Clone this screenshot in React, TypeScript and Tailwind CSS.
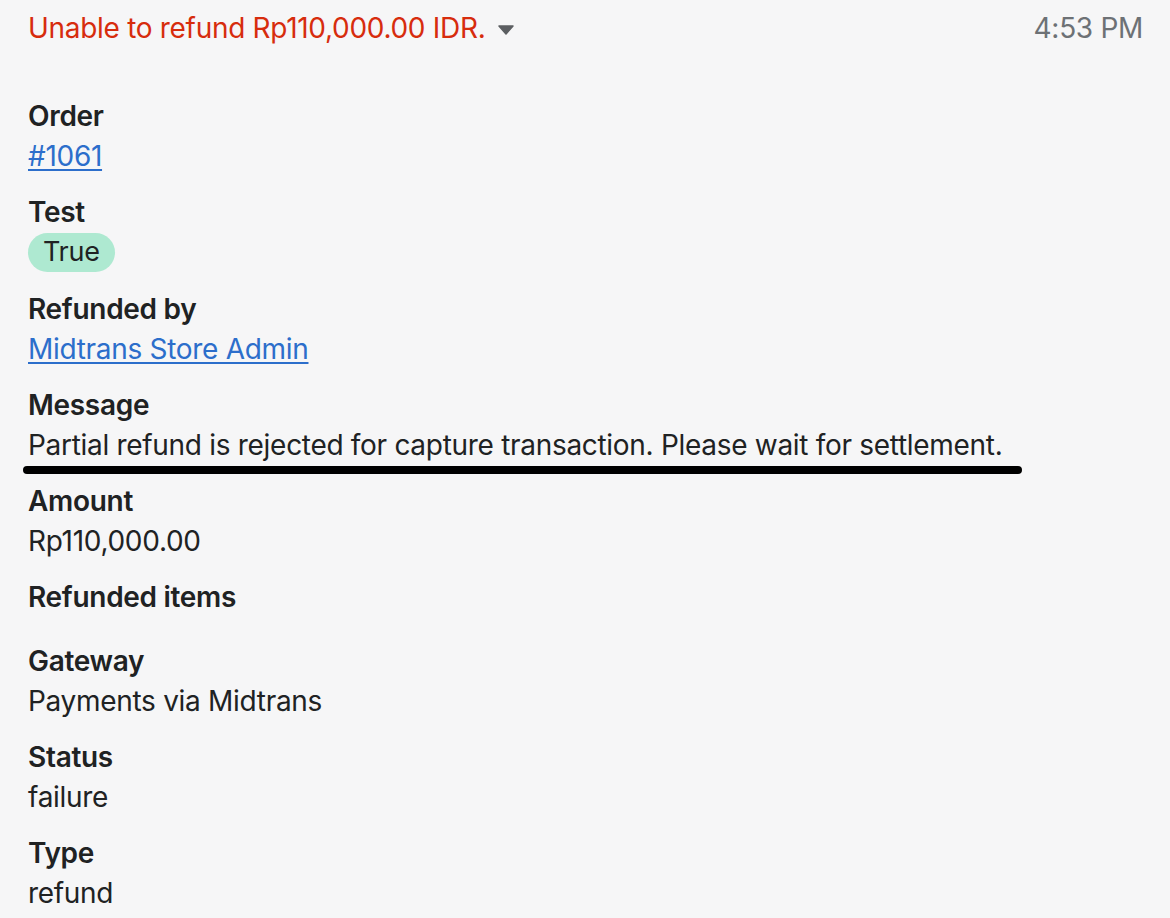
import React from "react";

const font = { fontFamily: "Inter, 'Noto Sans', sans-serif" };

function Field({ label, children }: { label: string; children?: React.ReactNode }) {
  return (
    <div className="flex flex-col">
      <div className="text-[28px] leading-[40px] font-semibold text-[#202223] tracking-[-0.3px]">{label}</div>
      {children}
    </div>
  );
}

function Value({ children }: { children: React.ReactNode }) {
  return <div className="text-[28px] leading-[40px] text-[#202223] tracking-[-0.3px]">{children}</div>;
}

function Link({ children }: { children: React.ReactNode }) {
  return (
    <a
      href="#"
      className="text-[28px] leading-[40px] text-[#2c6ecb] tracking-[-0.3px] underline underline-offset-[3px] decoration-[2px] self-start"
    >
      {children}
    </a>
  );
}

export default function App() {
  return (
    <div className="w-[1170px] h-[918px] bg-[#f6f6f7] overflow-hidden" style={font}>
      <div className="flex items-center justify-between pl-[28px] pr-[27px] pt-[8px]">
        <div className="flex items-center gap-[13px]">
          <span className="text-[28px] leading-[40px] text-[#d72c0d] tracking-[-0.3px]">
            Unable to refund Rp110,000.00 IDR.
          </span>
          <svg width="16" height="10" viewBox="0 0 16 10" className="mt-[3px]">
            <path d="M1 1h14L8 9z" fill="#5c5f62" stroke="#5c5f62" strokeWidth="1.5" strokeLinejoin="round" />
          </svg>
        </div>
        <span className="text-[28px] leading-[40px] text-[#6d7175] tracking-[-0.3px]">4:53 PM</span>
      </div>

      <div className="flex flex-col gap-[16px] pl-[28px] pt-[48px]">
        <Field label="Order">
          <Link>#1061</Link>
        </Field>
        <Field label="Test">
          <div className="py-[1px]">
            <span className="inline-flex items-center h-[39px] px-[15px] rounded-full bg-[#aee9d1] text-[27px] text-[#202223] tracking-[-0.3px]">
              True
            </span>
          </div>
        </Field>
        <Field label="Refunded by">
          <Link>Midtrans Store Admin</Link>
        </Field>
        <Field label="Message">
          <div className="relative">
            <Value>Partial refund is rejected for capture transaction. Please wait for settlement.</Value>
            {/* hand-drawn annotation under the message */}
            <div className="absolute left-[-5px] top-[41px] w-[999px] h-[8px] rounded-full bg-black" />
          </div>
        </Field>
        <Field label="Amount">
          <Value>Rp110,000.00</Value>
        </Field>
        <Field label="Refunded items">
          <div className="h-[8px]" />
        </Field>
        <Field label="Gateway">
          <Value>Payments via Midtrans</Value>
        </Field>
        <Field label="Status">
          <Value>failure</Value>
        </Field>
        <Field label="Type">
          <Value>refund</Value>
        </Field>
      </div>
    </div>
  );
}
